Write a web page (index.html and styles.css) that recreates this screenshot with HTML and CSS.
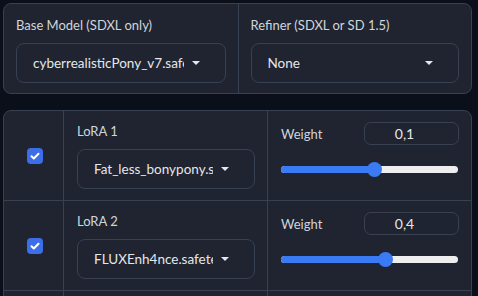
FILE: index.html
```html
<!DOCTYPE html>
<html lang="en">
<head>
    <meta charset="UTF-8">
    <title>Model settings</title>
    <link rel="stylesheet" href="styles.css">
</head>
<body>

<div class="panel models">
    <div class="cell">
        <div class="label">Base Model (SDXL only)</div>
        <div class="dropdown">
            <span class="value">cyberrealisticPony_v7.safetensors</span>
            <span class="arrow"></span>
        </div>
    </div>
    <div class="cell">
        <div class="label">Refiner (SDXL or SD 1.5)</div>
        <div class="dropdown">
            <span class="value">None</span>
            <span class="arrow"></span>
        </div>
    </div>
</div>

<div class="panel loras">
    <div class="check-cell"><span class="checkbox"><svg viewBox="0 0 16 16"><path d="M4.5 8.3l2.3 2.2 4.7-4.8" /></svg></span></div>
    <div class="cell">
        <div class="label">LoRA 1</div>
        <div class="dropdown">
            <span class="value">Fat_less_bonypony.safetensors</span>
            <span class="arrow"></span>
        </div>
    </div>
    <div class="cell">
        <div class="weight-head">
            <div class="label">Weight</div>
            <div class="number">0,1</div>
        </div>
        <div class="slider"><div class="fill" style="width: 52.5%;"><span class="thumb"></span></div></div>
    </div>

    <div class="check-cell"><span class="checkbox"><svg viewBox="0 0 16 16"><path d="M4.5 8.3l2.3 2.2 4.7-4.8" /></svg></span></div>
    <div class="cell">
        <div class="label">LoRA 2</div>
        <div class="dropdown">
            <span class="value">FLUXEnh4nce.safetensors</span>
            <span class="arrow"></span>
        </div>
    </div>
    <div class="cell">
        <div class="weight-head">
            <div class="label">Weight</div>
            <div class="number">0,4</div>
        </div>
        <div class="slider"><div class="fill" style="width: 59%;"><span class="thumb"></span></div></div>
    </div>

    <div class="check-cell"></div>
    <div class="cell"></div>
    <div class="cell"></div>
</div>

</body>
</html>
```

FILE: styles.css
```css
body {
    font-family: Lato, "Noto Sans", sans-serif;
    background-color: #0b0f19;
    color: #d1d5db;
    margin: 0;
    padding: 3px;
    width: 469px;
    height: 290px;
    overflow: hidden;
}
.panel {
    background-color: #1f2430;
    border: 1px solid #374151;
    border-radius: 8px;
}
.models {
    display: grid;
    grid-template-columns: minmax(0, 1fr) minmax(0, 1fr);
    margin-bottom: 16px;
}
.models .cell {
    padding: 12px 12px 10px;
}
.models .cell + .cell {
    border-left: 1px solid #374151;
}
.label {
    font-size: 13px;
    line-height: 18px;
    color: #d1d5db;
}
.dropdown {
    display: flex;
    align-items: center;
    height: 38px;
    margin-top: 9px;
    padding: 0 25px 0 16px;
    border: 1px solid #374151;
    border-radius: 8px;
    gap: 8px;
    color: #e5e7eb;
    font-size: 13.5px;
}
.value {
    flex: 1;
    min-width: 0;
    white-space: nowrap;
    overflow: hidden;
}
.arrow {
    flex: none;
    width: 0;
    height: 0;
    border-left: 4px solid transparent;
    border-right: 4px solid transparent;
    border-top: 4px solid #e5e7eb;
}
.loras {
    display: grid;
    grid-template-columns: 59px 204px minmax(0, 1fr);
    grid-auto-rows: 90px;
}
.loras > div {
    border-bottom: 1px solid #374151;
}
.loras .cell {
    min-width: 0;
    padding: 11px 12px 0 13px;
    border-left: 1px solid #374151;
}
.loras .dropdown {
    margin-top: 9px;
}
.check-cell {
    display: flex;
    align-items: center;
    justify-content: center;
    padding-left: 3px;
}
.checkbox {
    width: 16px;
    height: 16px;
    border-radius: 4px;
    background-color: #3b6ee8;
    display: flex;
}
.checkbox svg {
    width: 16px;
    height: 16px;
    fill: none;
    stroke: white;
    stroke-width: 2;
    stroke-linecap: round;
    stroke-linejoin: round;
}
.weight-head {
    display: flex;
    justify-content: space-between;
    align-items: center;
}
.number {
    box-sizing: border-box;
    width: 95px;
    height: 23px;
    border: 1px solid #374151;
    border-radius: 7px;
    padding-right: 14px;
    text-align: center;
    line-height: 21px;
    font-size: 14px;
    color: #e5e7eb;
}
.slider {
    margin-top: 21px;
    margin-right: 1px;
    height: 7px;
    border-radius: 4px;
    background-color: #eeeeee;
}
.fill {
    position: relative;
    height: 100%;
    border-radius: 4px;
    background-color: #3b7af5;
}
.thumb {
    position: absolute;
    right: -8px;
    top: -4px;
    width: 15px;
    height: 15px;
    border-radius: 50%;
    background-color: #3b7af5;
}
```
